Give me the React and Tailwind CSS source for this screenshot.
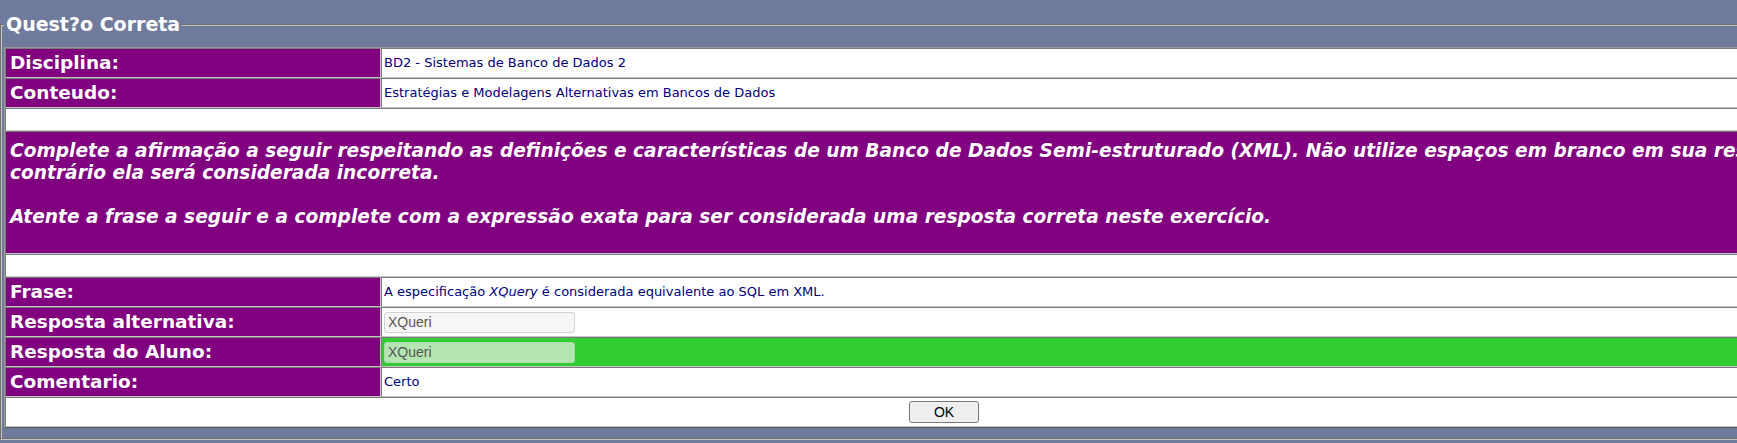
const cellBorder = 'border border-t-[#7a7a7a] border-l-[#7a7a7a] border-b-[#c4c4c4] border-r-[#c4c4c4]';

const labelCls = `${cellBorder} w-[376px] bg-[#800080] px-[4px] text-left align-middle text-[18.5px] font-bold leading-[22px] text-white`;
const valueCls = `${cellBorder} bg-white px-[2px] align-middle text-[13px] leading-[16px] text-[#000080]`;

const Row = ({ label, children, green }) => (
    <tr className="h-[30px]">
        <td className={labelCls}>{label}</td>
        <td className={green ? valueCls.replace('bg-white', 'bg-[#32cd32]') : valueCls}>{children}</td>
    </tr>
);

const App = () => {
    return (
        <div className="min-h-screen w-full overflow-hidden bg-[#6f7a9c] pt-[14px] font-['DejaVu_Sans',Verdana,sans-serif]">
            <fieldset className="border-2 border-[#c4c4c4] px-[2px] pt-[12px] pb-[10px] [border-style:groove]">
                <legend className="px-[2px] text-[19px] font-bold leading-[21px] text-white">Quest?o Correta</legend>

                <table className="w-[1880px] table-fixed border-separate border-spacing-0 border border-t-[#9a9a9a] border-l-[#9a9a9a] border-b-[#5a5a5a] border-r-[#5a5a5a]">
                    <tbody>
                        <Row label="Disciplina:">BD2 - Sistemas de Banco de Dados 2</Row>
                        <Row label="Conteudo:">Estratégias e Modelagens Alternativas em Bancos de Dados</Row>

                        <tr className="h-[23px]">
                            <td colSpan={2} className={`${cellBorder} bg-white`}></td>
                        </tr>

                        <tr className="h-[123px]">
                            <td colSpan={2} className={`${cellBorder} bg-[#800080] px-[4px] pt-[8px] pb-[2px] align-top text-[18.6px] font-bold italic leading-[22px] text-white`}>
                                <span className="whitespace-nowrap">
                                    Complete a afirmação a seguir respeitando as definições e características de um Banco de Dados Semi-estruturado (XML). Não utilize espaços em branco em sua resposta, caso
                                </span>
                                <br />
                                contrário ela será considerada incorreta.
                                <br />
                                <br />
                                Atente a frase a seguir e a complete com a expressão exata para ser considerada uma resposta correta neste exercício.
                            </td>
                        </tr>

                        <tr className="h-[23px]">
                            <td colSpan={2} className={`${cellBorder} bg-white`}></td>
                        </tr>

                        <Row label="Frase:">
                            A especificação <i>XQuery</i> é considerada equivalente ao SQL em XML.
                        </Row>
                        <Row label="Resposta alternativa:">
                            <input
                                type="text"
                                readOnly
                                value="XQueri"
                                className="block h-[21px] w-[191px] rounded-[3px] border border-[#d2d2d2] bg-[#f6f6f6] px-[3px] font-['Liberation_Sans',Arial,sans-serif] text-[14px] text-[#555555] outline-none"
                            />
                        </Row>
                        <Row label="Resposta do Aluno:" green>
                            <input
                                type="text"
                                readOnly
                                value="XQueri"
                                className="block h-[21px] w-[191px] rounded-[3px] border border-[#a6dca6] bg-[#b4e6b4] px-[3px] font-['Liberation_Sans',Arial,sans-serif] text-[14px] text-[#555555] outline-none"
                            />
                        </Row>
                        <Row label="Comentario:">Certo</Row>

                        <tr className="h-[30px]">
                            <td colSpan={2} className={`${cellBorder} bg-white text-center align-middle`}>
                                <button className="h-[22px] w-[70px] rounded-[3px] border border-[#767676] bg-[#efefef] font-['Liberation_Sans',Arial,sans-serif] text-[14px] text-black">
                                    OK
                                </button>
                            </td>
                        </tr>
                    </tbody>
                </table>
            </fieldset>
        </div>
    );
};

export default App;
